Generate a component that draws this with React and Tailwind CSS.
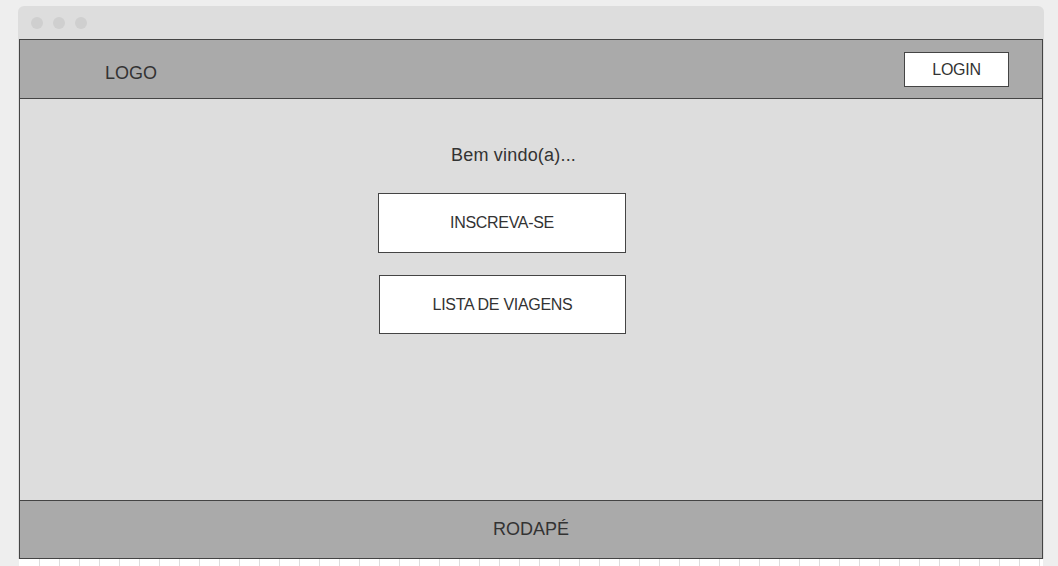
import React from 'react';

const ticks = Array.from({ length: 51 });

const ActionBox = ({ children, className = '' }) => (
  <div
    className={`flex items-center justify-center border border-[#444] bg-white text-[16px] text-[#333] tracking-[-0.3px] ${className}`}
  >
    {children}
  </div>
);

export default function App() {
  return (
    <div
      className="h-[566px] overflow-hidden bg-[#eeeeee] pl-[18px] pt-[6px]"
      style={{ fontFamily: '"Liberation Sans", Arial, sans-serif' }}
    >
      <div className="w-[1026px] rounded-t-[6px] bg-[#dddddd]">
        {/* title bar */}
        <div className="flex h-[33px] items-center gap-[10px] pl-[13px] pt-[1px]">
          <span className="h-[12px] w-[12px] rounded-full bg-[#cfcfcf]" />
          <span className="h-[12px] w-[12px] rounded-full bg-[#cfcfcf]" />
          <span className="h-[12px] w-[12px] rounded-full bg-[#cfcfcf]" />
        </div>

        <div className="ml-[1px] w-[1024px] border border-[#444]">
          {/* header */}
          <div className="flex h-[59px] items-start justify-between border-b border-[#444] bg-[#aaaaaa]">
            <div className="ml-[85px] pt-[23px] text-[18px] leading-[20px] text-[#333]">LOGO</div>
            <ActionBox className="mr-[33px] mt-[12px] h-[35px] w-[105px]">LOGIN</ActionBox>
          </div>

          {/* content */}
          <div className="h-[401px] pt-[46px]">
            <div className="pl-[431px] text-[18px] leading-[20px] tracking-[0.2px] text-[#333]">Bem vindo(a)...</div>
            <ActionBox className="ml-[358px] mt-[28px] h-[60px] w-[248px]">INSCREVA-SE</ActionBox>
            <ActionBox className="ml-[359px] mt-[22px] h-[59px] w-[247px]">LISTA DE VIAGENS</ActionBox>
          </div>

          {/* footer */}
          <div className="flex h-[58px] items-center justify-center border-t border-[#444] bg-[#aaaaaa] text-[18px] text-[#333]">
            RODAPÉ
          </div>
        </div>
      </div>

      {/* canvas below */}
      <div className="ml-[1px] flex h-[10px] w-[1024px] bg-white pl-[20px]">
        {ticks.map((_, i) => (
          <div key={i} className="h-full w-[20px] shrink-0 border-l border-[#dddddd]" />
        ))}
      </div>
    </div>
  );
}
